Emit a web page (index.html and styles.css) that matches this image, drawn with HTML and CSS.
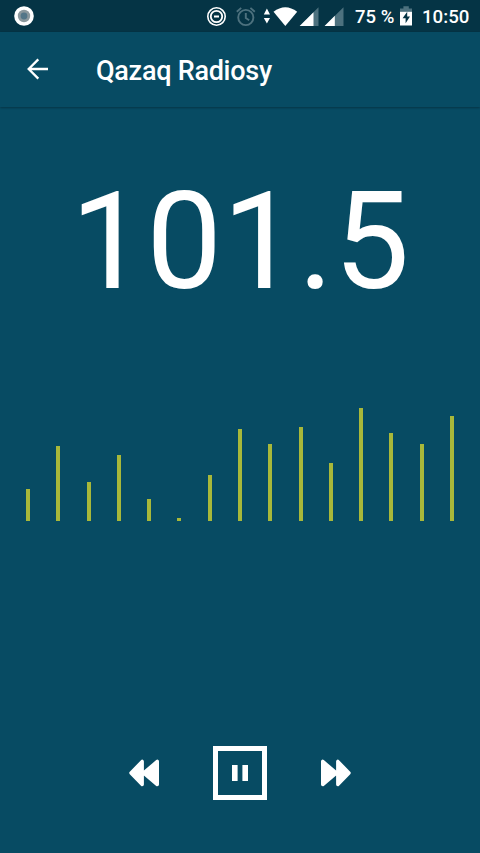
FILE: index.html
```html
<!DOCTYPE html>
<html lang="en">
<head>
  <meta charset="UTF-8" />
  <meta name="viewport" content="width=device-width, initial-scale=1.0"/>
  <title>Qazaq Radiosy</title>
  <link rel="stylesheet" href="styles.css">
</head>
<body>
  <!-- Status bar -->
  <div class="status-bar">
    <svg class="record-icon" width="20" height="20" viewBox="0 0 20 20">
      <circle cx="10" cy="10" r="9.8" fill="#fff"/>
      <circle cx="10" cy="10" r="6.2" fill="#8b989d"/>
      <circle cx="10" cy="10" r="3.4" fill="#537688"/>
    </svg>
    <svg class="status-icons" width="137" height="22" viewBox="0 0 137 22">
      <!-- do not disturb -->
      <g fill="none" stroke="#fff">
        <circle cx="9.5" cy="10.5" r="8.7" stroke-width="1.6"/>
        <circle cx="9.5" cy="10.5" r="5.7" stroke-width="1.8"/>
        <path d="M7 10.5h5" stroke-width="2"/>
      </g>
      <!-- alarm -->
      <g fill="none" stroke="#4d717e" stroke-width="1.9">
        <circle cx="38.8" cy="11.5" r="7.6"/>
        <path d="M38.8 7v5l3.4 2.2M29.8 5.7l4.4-3.8M47.8 5.7l-4.4-3.8"/>
      </g>
      <!-- wifi -->
      <path d="M56.8 8.4h6.2L59.9 2.6zM56.8 11.9h6.2l-3.1 5.7z" fill="#fff"/>
      <path d="M66.5 5.8Q78.3-3.5 90.2 5.8L78.3 20z" fill="#fff"/>
      <!-- signal -->
      <path d="M92.7 20L111.5 1.2V20z" fill="#4d717e"/>
      <path d="M92.7 20L106.5 6.2V20z" fill="#fff"/>
      <path d="M117.6 20L136.5 1.2V20z" fill="#4d717e"/>
      <path d="M117.6 20L127.8 9.8V20z" fill="#fff"/>
    </svg>
    <span class="battery-level">75 %</span>
    <svg class="battery-icon" width="12" height="20" viewBox="0 0 12 20">
      <path d="M0 2.4h3.4V.3h5.4v2.1H12V7H0z" fill="#4d717e"/>
      <path d="M0 5.8h12v13.7H0z" fill="#fff"/>
      <path d="M7.2 5.8L2.6 12.3h3v5L10 10.5H7.2z" fill="#053445"/>
    </svg>
    <span class="clock">10:50</span>
  </div>

  <!-- Toolbar -->
  <header class="toolbar">
    <button class="icon-btn back-btn" aria-label="Back">
      <svg width="22" height="22" viewBox="0 0 22 22" fill="none" stroke="#fff" stroke-width="2.3">
        <path d="M22 11H2.6M12.3 1.4L2.7 11l9.6 9.6"/>
      </svg>
    </button>
    <h1>Qazaq Radiosy</h1>
  </header>

  <main class="player">
    <div class="frequency">101.5</div>

    <div class="visualizer">
      <span class="bar" style="height: 32px"></span>
      <span class="bar" style="height: 75px"></span>
      <span class="bar" style="height: 39px"></span>
      <span class="bar" style="height: 66px"></span>
      <span class="bar" style="height: 22px"></span>
      <span class="bar" style="height: 3px"></span>
      <span class="bar" style="height: 46px"></span>
      <span class="bar" style="height: 92px"></span>
      <span class="bar" style="height: 77px"></span>
      <span class="bar" style="height: 94px"></span>
      <span class="bar" style="height: 58px"></span>
      <span class="bar" style="height: 113px"></span>
      <span class="bar" style="height: 88px"></span>
      <span class="bar" style="height: 77px"></span>
      <span class="bar" style="height: 105px"></span>
    </div>

    <div class="controls">
      <button class="icon-btn" aria-label="Previous">
        <svg width="32" height="28" viewBox="0 0 32 28" fill="#fff" stroke="#fff" stroke-width="3.4" stroke-linejoin="round">
          <path d="M14.2 2.4v23.2L3 14zM29.3 2.4v23.2L15.5 14z"/>
        </svg>
      </button>
      <button class="icon-btn pause-btn" aria-label="Pause">
        <svg width="16" height="16" viewBox="0 0 16 16" fill="#fff">
          <path d="M0 0h5.6v16H0zM10.4 0H16v16h-5.6z"/>
        </svg>
      </button>
      <button class="icon-btn" aria-label="Next">
        <svg width="32" height="28" viewBox="0 0 32 28" fill="#fff" stroke="#fff" stroke-width="3.4" stroke-linejoin="round">
          <path d="M17.8 2.4v23.2L29 14zM2.7 2.4v23.2L16.5 14z"/>
        </svg>
      </button>
    </div>
  </main>
</body>
</html>
```

FILE: styles.css
```css
* {
  margin: 0;
  padding: 0;
  box-sizing: border-box;
}

body {
  display: flex;
  flex-direction: column;
  height: 100vh;
  font-family: Roboto, sans-serif;
  background: #074b63;
  color: #fff;
  overflow: hidden;
}

svg {
  display: block;
  flex-shrink: 0;
}

.status-bar {
  display: flex;
  align-items: center;
  height: 32px;
  padding: 0 11px 0 14px;
  background: #053445;
  font-size: 19px;
  font-weight: 500;
  line-height: 32px;
  white-space: nowrap;
}

.status-icons {
  margin-left: auto;
  margin-top: 1px;
}

.battery-level {
  width: 39px;
  margin-left: 11px;
  margin-right: 6px;
  padding-top: 2px;
  font-size: 18.5px;
}

.battery-icon {
  margin-right: 10px;
}

.clock {
  width: 47px;
  padding-top: 2px;
  font-size: 18.7px;
}

.toolbar {
  display: flex;
  align-items: center;
  height: 75px;
  padding-left: 26px;
  box-shadow: 0 1px 2px rgba(0, 0, 0, 0.3);
}

.icon-btn {
  display: flex;
  align-items: center;
  justify-content: center;
  background: none;
  border: none;
  cursor: pointer;
}

.back-btn {
  margin-right: 48px;
  padding-bottom: 1px;
}

.toolbar h1 {
  padding-top: 2px;
  font-size: 27px;
  font-weight: 500;
  line-height: 32px;
  letter-spacing: -0.27px;
}

.player {
  flex: 1;
  display: flex;
  flex-direction: column;
}

.frequency {
  margin-top: 55px;
  font-size: 135px;
  line-height: 160px;
  text-align: center;
}

.visualizer {
  display: flex;
  justify-content: space-between;
  align-items: flex-end;
  height: 120px;
  margin-top: 79px;
  padding: 0 26px;
}

.bar {
  width: 4px;
  background: #a8b83a;
}

.controls {
  display: flex;
  align-items: center;
  justify-content: center;
  gap: 53px;
  margin-top: auto;
  padding-bottom: 53px;
}

.pause-btn {
  width: 54px;
  height: 54px;
  border: 5px solid #fff;
}
```
